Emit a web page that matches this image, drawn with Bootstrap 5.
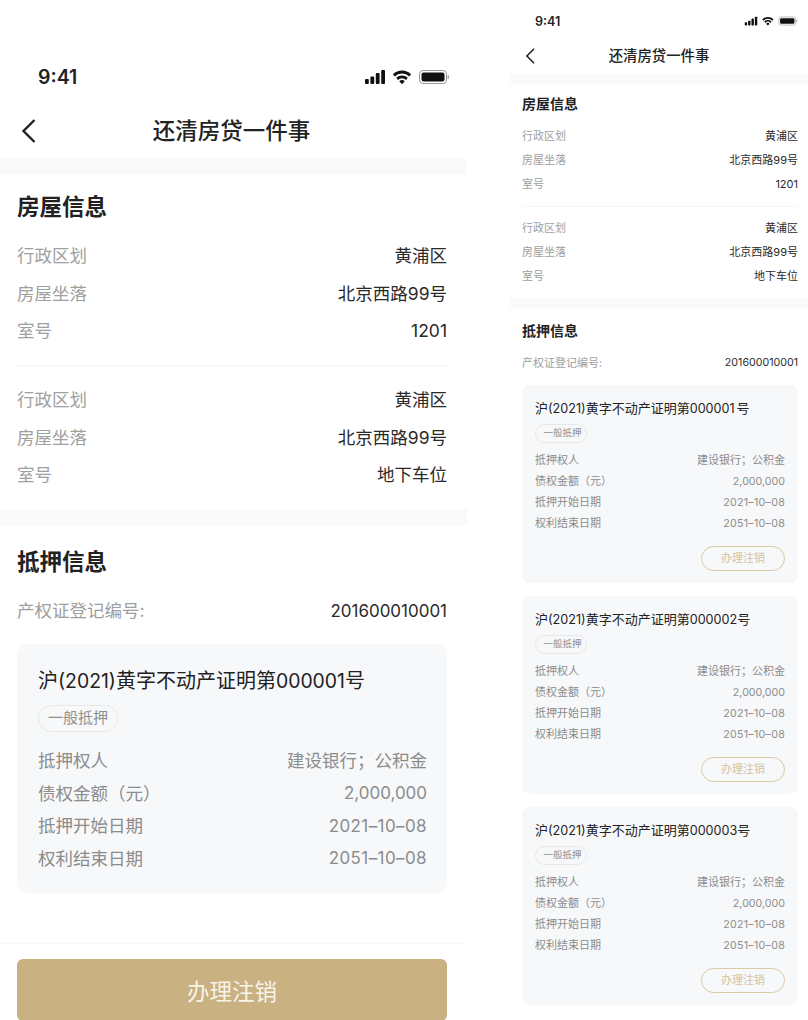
<!DOCTYPE html>
<html lang="zh-CN">
<head>
<meta charset="utf-8">
<title>还清房贷一件事</title>
<link href="https://cdn.jsdelivr.net/npm/bootstrap@5.3.0/dist/css/bootstrap.min.css" rel="stylesheet">
<style>
html,body{height:100%;overflow:hidden;background:#fff}
body{font-family:Inter,"Noto Sans CJK SC",sans-serif;color:#222}
.stage{height:1020px;overflow:hidden}
.phone{flex:none;overflow:hidden}
.phone-a{width:467px;margin-right:43px;padding-top:54px;
 --pad-l:17px;--pad-r:20px;--band:16px;--fs:17.5px;--row:37.5px;--title:22.5px;--title-h:32px}
.phone-b{width:298px;padding-top:11px;
 --pad-l:12px;--pad-r:10px;--band:10px;--fs:11px;--row:24px;--title:14px;--title-h:20px}
.status-bar{display:flex;align-items:center;justify-content:space-between;font-weight:600}
.status-bar span{padding-top:2px}
.phone-a .status-bar{height:46px;padding:0 18px 0 38px;font-size:19.5px}
.phone-b .status-bar{height:20px;padding:0 10px 0 25px;font-size:12.5px}
.phone-a .status-bar svg{width:84px;height:16px}
.phone-b .status-bar svg{width:54px;height:10px}
.nav-head{position:relative;display:flex;align-items:center;justify-content:center;font-weight:500;color:#222}
.phone-a .nav-head{height:56px;margin-top:3px;font-size:22.5px}
.phone-a .nav-head b{font-weight:500;margin-right:4px}
.phone-b .nav-head{height:36px;margin-top:7px;font-size:14.4px}
.phone-b .nav-head b{font-weight:500}
.nav-back{position:absolute;top:50%;transform:translateY(-50%)}
.phone-a .nav-back{left:21px;width:16px;height:26px}
.phone-b .nav-back{left:15px;width:11px;height:17px}
.band{height:var(--band);background:#fafafa}
.sect{padding:0 var(--pad-r) 0 var(--pad-l)}
.sect-title{font-size:var(--title);line-height:var(--title-h);font-weight:600;color:#222}
.info{display:flex;justify-content:space-between;align-items:center;height:var(--row);font-size:var(--fs);white-space:nowrap}
.info .lbl{color:#a0a0a0}
.info .val{color:#2a2a2a}
.rule{height:1px;background:#f5f5f5}
.mort{background:#f7f8fa}
.mort-title{color:#222;white-space:nowrap}
.digits{font-size:.97em}
.stamp{font-size:.97em;letter-spacing:.025em}
.gap-num{margin-left:2px}
.kind{display:inline-flex;align-items:center;justify-content:center;border:1px solid #e8e8e8;border-radius:999px;color:#909090}
.term{display:flex;justify-content:space-between;align-items:center;color:#8c8c8c;white-space:nowrap}
.cancel-out{display:flex;align-items:center;justify-content:center;background:transparent;border:1px solid #dcc9a6;border-radius:999px;color:#d6c29b;padding:0}

/* left phone spacing */
.phone-a .sect-title{margin-top:16px}
.phone-a .g1{margin-top:14.5px}
.phone-a .rule{margin-top:14.5px}
.phone-a .g2{margin-top:16px;padding-bottom:14.5px}
.phone-a .t2{margin-top:21px}
.phone-a .reg{margin-top:15px}
.phone-a .mort{margin-top:14px;padding:21.5px 20px 17.5px 21px;border-radius:12px}
.phone-a .mort-title{font-size:20px;line-height:30px}
.phone-a .kind{margin-top:9.5px;height:27px;width:80px;font-size:15px;display:flex}
.phone-a .terms{margin-top:12.7px}
.phone-a .term{height:32.7px;font-size:17.5px}
.foot{margin-top:50px;border-top:1px solid #f9f9f9;padding:15px 20px 0 17px}
.cancel-main{display:flex;align-items:center;justify-content:center;width:100%;height:62px;border:0;border-radius:6px;background:#c9b182;color:#f8f4ea;font-size:22.5px;padding:4px 0 0}

/* right phone spacing */
.phone-b .sect-title{margin-top:10px}
.phone-b .g1{margin-top:10px}
.phone-b .rule{margin-top:10px}
.phone-b .g2{margin-top:9px;padding-bottom:10px}
.phone-b .t2{margin-top:13px}
.phone-b .reg{margin-top:10px}
.phone-b .mort{margin-top:10px;padding:13px;border-radius:8px;height:198px}
.phone-b .mort + .mort{margin-top:13px}
.phone-b .mort-title{font-size:13px;line-height:20px}
.phone-b .kind{margin-top:5px;height:19px;width:52px;font-size:9.5px;display:flex;padding-left:3px}
.phone-b .terms{margin-top:7px}
.phone-b .term{height:21px;font-size:11px}
.phone-b .cancel-out{margin:12px 0 0 auto;width:84px;height:25px;font-size:11px}
</style>
</head>
<body>
<div class="stage d-flex align-items-start">

<section class="phone phone-a">
  <div class="status-bar"><span>9:41</span>
    <svg viewBox="0 0 84 16" aria-hidden="true"><rect x="0" y="10" width="3.8" height="5" rx="1" fill="#111"/><rect x="5.4" y="7.5" width="3.8" height="7.5" rx="1" fill="#111"/><rect x="10.8" y="4" width="3.8" height="11" rx="1" fill="#111"/><rect x="16.2" y="1" width="3.8" height="14" rx="1" fill="#111"/><path d="M28 5.2a13 13 0 0 1 18 0l-1.700 2.300a10.500 10.500 0 0 0-14.600 0zM31.200 8.800a8.300 8.300 0 0 1 11.600 0l-1.800 2.300a5.500 5.500 0 0 0-8 0zM34.200 12.300a4 4 0 0 1 5.600 0L37 15.300z" fill="#111"/><rect x="54.500" y="1.500" width="27" height="13" rx="3.500" fill="none" stroke="#999" stroke-width="1"/><rect x="56.500" y="3.500" width="23" height="9" rx="2" fill="#111"/><rect x="82.500" y="6" width="1.500" height="4" rx=".7" fill="#aaa"/></svg>
  </div>
  <div class="nav-head"><svg class="nav-back" viewBox="0 0 16 26" aria-hidden="true"><path d="M13.500 2 2.500 13l11 11" fill="none" stroke="#222" stroke-width="2.400"/></svg><b>还清房贷一件事</b></div>
  <div class="band"></div>
  <div class="sect">
    <div class="sect-title">房屋信息</div>
    <div class="g1">
      <div class="info"><span class="lbl">行政区划</span><span class="val">黄浦区</span></div>
      <div class="info"><span class="lbl">房屋坐落</span><span class="val">北京西路99号</span></div>
      <div class="info"><span class="lbl">室号</span><span class="val">1201</span></div>
    </div>
    <div class="rule"></div>
    <div class="g2">
      <div class="info"><span class="lbl">行政区划</span><span class="val">黄浦区</span></div>
      <div class="info"><span class="lbl">房屋坐落</span><span class="val">北京西路99号</span></div>
      <div class="info"><span class="lbl">室号</span><span class="val">地下车位</span></div>
    </div>
  </div>
  <div class="band"></div>
  <div class="sect">
    <div class="sect-title t2">抵押信息</div>
    <div class="info reg"><span class="lbl">产权证登记编号:</span><span class="val digits">201600010001</span></div>
    <div class="mort">
      <div class="mort-title">沪<span class="digits">(2021)</span>黄字不动产证明第<span class="digits">000001</span>号</div>
      <span class="kind">一般抵押</span>
      <div class="terms">
        <div class="term"><span>抵押权人</span><span>建设银行；公积金</span></div>
        <div class="term"><span>债权金额（元）</span><span class="digits">2,000,000</span></div>
        <div class="term"><span>抵押开始日期</span><span class="stamp">2021–10–08</span></div>
        <div class="term"><span>权利结束日期</span><span class="stamp">2051–10–08</span></div>
      </div>
    </div>
  </div>
  <div class="foot"><button type="button" class="btn cancel-main">办理注销</button></div>
</section>

<section class="phone phone-b">
  <div class="status-bar"><span>9:41</span>
    <svg viewBox="0 0 84 16" aria-hidden="true"><rect x="0" y="10" width="3.8" height="5" rx="1" fill="#111"/><rect x="5.4" y="7.5" width="3.8" height="7.5" rx="1" fill="#111"/><rect x="10.8" y="4" width="3.8" height="11" rx="1" fill="#111"/><rect x="16.2" y="1" width="3.8" height="14" rx="1" fill="#111"/><path d="M28 5.2a13 13 0 0 1 18 0l-1.700 2.300a10.500 10.500 0 0 0-14.600 0zM31.200 8.800a8.300 8.300 0 0 1 11.600 0l-1.800 2.300a5.500 5.500 0 0 0-8 0zM34.200 12.300a4 4 0 0 1 5.600 0L37 15.300z" fill="#111"/><rect x="54.500" y="1.500" width="27" height="13" rx="3.500" fill="none" stroke="#999" stroke-width="1"/><rect x="56.500" y="3.500" width="23" height="9" rx="2" fill="#111"/><rect x="82.500" y="6" width="1.500" height="4" rx=".7" fill="#aaa"/></svg>
  </div>
  <div class="nav-head"><svg class="nav-back" viewBox="0 0 16 26" aria-hidden="true"><path d="M13.500 2 2.500 13l11 11" fill="none" stroke="#222" stroke-width="2.400"/></svg><b>还清房贷一件事</b></div>
  <div class="band"></div>
  <div class="sect">
    <div class="sect-title">房屋信息</div>
    <div class="g1">
      <div class="info"><span class="lbl">行政区划</span><span class="val">黄浦区</span></div>
      <div class="info"><span class="lbl">房屋坐落</span><span class="val">北京西路99号</span></div>
      <div class="info"><span class="lbl">室号</span><span class="val">1201</span></div>
    </div>
    <div class="rule"></div>
    <div class="g2">
      <div class="info"><span class="lbl">行政区划</span><span class="val">黄浦区</span></div>
      <div class="info"><span class="lbl">房屋坐落</span><span class="val">北京西路99号</span></div>
      <div class="info"><span class="lbl">室号</span><span class="val">地下车位</span></div>
    </div>
  </div>
  <div class="band"></div>
  <div class="sect">
    <div class="sect-title t2">抵押信息</div>
    <div class="info reg"><span class="lbl">产权证登记编号:</span><span class="val digits">201600010001</span></div>
    <div class="mort">
      <div class="mort-title">沪<span class="digits">(2021)</span>黄字不动产证明第<span class="digits">000001</span><span class="gap-num">号</span></div>
      <span class="kind">一般抵押</span>
      <div class="terms">
        <div class="term"><span>抵押权人</span><span>建设银行；公积金</span></div>
        <div class="term"><span>债权金额（元）</span><span class="digits">2,000,000</span></div>
        <div class="term"><span>抵押开始日期</span><span class="stamp">2021–10–08</span></div>
        <div class="term"><span>权利结束日期</span><span class="stamp">2051–10–08</span></div>
      </div>
      <button type="button" class="btn cancel-out">办理注销</button>
    </div>
    <div class="mort">
      <div class="mort-title">沪<span class="digits">(2021)</span>黄字不动产证明第<span class="digits">000002</span>号</div>
      <span class="kind">一般抵押</span>
      <div class="terms">
        <div class="term"><span>抵押权人</span><span>建设银行；公积金</span></div>
        <div class="term"><span>债权金额（元）</span><span class="digits">2,000,000</span></div>
        <div class="term"><span>抵押开始日期</span><span class="stamp">2021–10–08</span></div>
        <div class="term"><span>权利结束日期</span><span class="stamp">2051–10–08</span></div>
      </div>
      <button type="button" class="btn cancel-out">办理注销</button>
    </div>
    <div class="mort">
      <div class="mort-title">沪<span class="digits">(2021)</span>黄字不动产证明第<span class="digits">000003</span>号</div>
      <span class="kind">一般抵押</span>
      <div class="terms">
        <div class="term"><span>抵押权人</span><span>建设银行；公积金</span></div>
        <div class="term"><span>债权金额（元）</span><span class="digits">2,000,000</span></div>
        <div class="term"><span>抵押开始日期</span><span class="stamp">2021–10–08</span></div>
        <div class="term"><span>权利结束日期</span><span class="stamp">2051–10–08</span></div>
      </div>
      <button type="button" class="btn cancel-out">办理注销</button>
    </div>
  </div>
</section>

</div>
<script src="https://cdn.jsdelivr.net/npm/bootstrap@5.3.0/dist/js/bootstrap.bundle.min.js"></script>
</body>
</html>
